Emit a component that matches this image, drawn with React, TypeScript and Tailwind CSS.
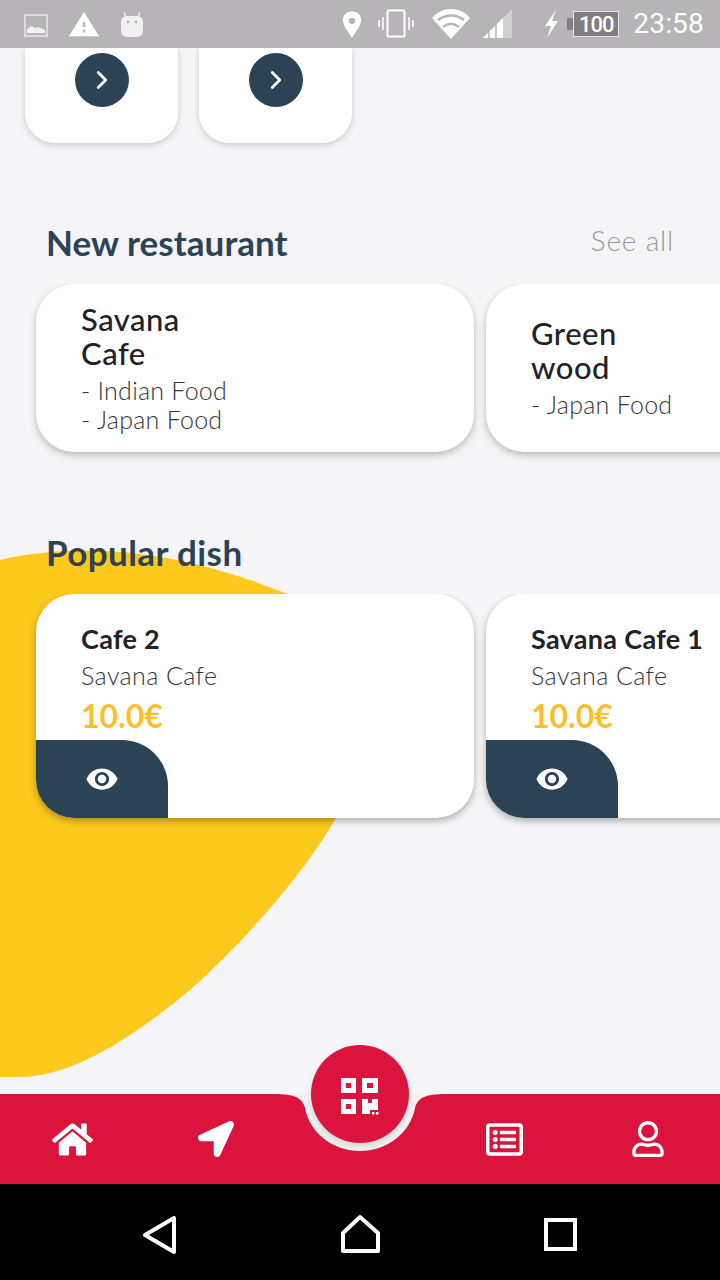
import { ChevronRight } from "lucide-react";
import { FaHome, FaLocationArrow, FaRegListAlt, FaRegUser } from "react-icons/fa";
import { MdRemoveRedEye } from "react-icons/md";

function StatusBar() {
  return (
    <div className="h-12 shrink-0 bg-[#b6b4b6] flex items-center pl-6 pr-[16px] text-white relative z-20">
      <svg width="24" height="24" viewBox="0 0 24 24" className="mt-0.5">
        <rect x="1" y="2" width="22" height="21" fill="none" stroke="#e6e6e6" strokeWidth="1.5" />
        <path d="M3 20v-4l5-3 3 2 3-1 7 3v3z" fill="#f2f2f2" />
      </svg>
      <svg width="30" height="28" viewBox="0 0 32 28" className="ml-[21px]">
        <path d="M16 1L32 27H0z" fill="#fff" />
        <rect x="14.8" y="12" width="2.6" height="5" fill="#b6b4b6" />
        <rect x="14.8" y="20" width="2.6" height="3" fill="#b6b4b6" />
      </svg>
      <svg width="24" height="28" viewBox="0 0 24 28" className="ml-[21px]">
        <path d="M4 2l2 6M20 2l-2 6" stroke="#eee" strokeWidth="1.5" />
        <rect x="1" y="6" width="22" height="21" rx="6" fill="#f1f1f1" />
        <circle cx="8" cy="12" r="1.4" fill="#b6b4b6" />
        <circle cx="16" cy="12" r="1.4" fill="#b6b4b6" />
      </svg>
      <div className="flex-1" />
      <svg width="20" height="30" viewBox="0 0 22 30">
        <path fillRule="evenodd" d="M11 1C5 1 1 5.500 1 11c0 6 6 13 10 19 4-6 10-13 10-19C21 5.500 17 1 11 1zm0 7a3.500 3.500 0 110 7 3.500 3.500 0 010-7z" fill="#fff" />
      </svg>
      <svg width="36" height="30" viewBox="0 0 36 30" className="ml-[16px]">
        <rect x="9.500" y="1.500" width="17" height="26" rx="1.500" fill="none" stroke="#fff" strokeWidth="2" />
        <path d="M5 8v13M1 11v7M31 8v13M35 11v7" stroke="#f0f0f0" strokeWidth="2" />
      </svg>
      <svg width="42" height="32" viewBox="0 0 40 32" className="ml-[16px]">
        <path d="M20 31L1 10C6 4 13 1 20 1s14 3 19 9z" fill="#fff" />
        <path d="M7 12c8-6 18-6 26 0M12 19c5-4 11-4 16 0" fill="none" stroke="#b6b4b6" strokeWidth="2.500" />
      </svg>
      <svg width="30" height="30" viewBox="0 0 30 30" className="ml-[11px]">
        <path d="M0 29L29 0v29z" fill="#d2d1d2" />
        <path d="M0 29L20 9v20z" fill="#fff" />
        <path d="M6 29v-10M13 29V14" stroke="#b6b4b6" strokeWidth="1.500" />
      </svg>
      <svg width="18" height="30" viewBox="0 0 18 30" className="ml-[29px]">
        <path d="M14 1L3 17h6L5 29 16 12h-6z" fill="#fff" />
      </svg>
      <div className="ml-[7px] flex items-center">
        <div className="w-[6px] h-3 bg-[#807e80]" />
        <div className="w-[46px] h-[26px] bg-[#807e80] border border-[#e6e6e6] flex items-center justify-center font-['Roboto',sans-serif] text-[22px] font-medium tracking-[-1px]">
          100
        </div>
      </div>
      <span className="ml-[14px] font-['Roboto',sans-serif] text-[28px] leading-none tracking-[0.2px]">23:58</span>
    </div>
  );
}

function TopCard() {
  return (
    <div className="w-[153px] h-[95px] bg-white rounded-b-[30px] shadow-[0_2px_6px_rgba(0,0,0,0.18)] flex justify-center pt-[5px]">
      <div className="w-[54px] h-[54px] rounded-full bg-[#2c4356] flex items-center justify-center text-white">
        <ChevronRight size={30} strokeWidth={2.25} />
      </div>
    </div>
  );
}

function RestaurantCard({ name, foods, width, top }: { name: string; foods: string; width: string; top: string }) {
  return (
    <div className={`${width} ${top} shrink-0 h-[168px] bg-white rounded-[38px] shadow-[0_3px_7px_rgba(0,0,0,0.25)] pl-[45px]`}>
      <div className="text-[31px] leading-[34px] text-[#1f2226] font-medium tracking-[0.5px] whitespace-pre-line">{name}</div>
      <div className="mt-[6px] text-[25px] leading-[29px] font-light tracking-[0.25px] text-[#33363a] whitespace-pre-line">{foods}</div>
    </div>
  );
}

function DishCard({ name, width }: { name: string; width: string }) {
  return (
    <div className={`${width} shrink-0 h-[224px] bg-white rounded-[38px] shadow-[0_3px_7px_rgba(0,0,0,0.3)] overflow-hidden flex flex-col`}>
      <div className="pl-[45px] pt-[28px] flex-1">
        <div className="text-[27px] leading-[34px] font-bold text-[#1f2226] tracking-[0.3px]">{name}</div>
        <div className="text-[25px] leading-[30px] mt-[4px] font-light tracking-[0.4px] text-[#33363a]">Savana Cafe</div>
        <div className="text-[32px] leading-[34px] mt-[9px] font-bold text-[#fbbf2e]">10.0€</div>
      </div>
      <div className="w-[132px] h-[78px] bg-[#2c4356] rounded-tr-[46px] flex items-center pl-[49px] text-white">
        <MdRemoveRedEye size={34} />
      </div>
    </div>
  );
}

function BottomNav() {
  return (
    <div className="h-[90px] shrink-0 bg-[#da143c] relative flex items-center text-white z-10">
      {/* notch behind the scan button */}
      <svg width="180" height="60" viewBox="0 0 180 60" className="absolute left-[270px] top-0">
        <path
          d="M0 0H180C158 0 148 2 145 14C140 40 116 57 90 57C64 57 40 40 35 14C32 2 22 0 0 0Z"
          fill="#f1f1f2"
        />
      </svg>
      <div className="absolute left-[311px] top-[-49px] w-[98px] h-[98px] rounded-full bg-[#da143c] flex items-center justify-center shadow-[0_3px_6px_rgba(0,0,0,0.12)]">
        <svg width="38" height="37" viewBox="0 0 38 37" className="mt-1">
          <path
            fillRule="evenodd"
            fill="#fff"
            d="M0 0H15V15H0ZM5 5V10H10V5ZM21 0H37V15H21ZM26 5V10H32V5ZM0 21H15V36H0ZM5 26V31H10V26ZM21 21H27V25H31V21H37V32H29V36H21Z"
          />
          <rect x="31" y="34" width="2.500" height="2.500" fill="#fff" />
          <rect x="35" y="34" width="2.500" height="2.500" fill="#fff" />
        </svg>
      </div>
      <div className="w-[144px] flex justify-center">
        <FaHome size={41} />
      </div>
      <div className="w-[144px] flex justify-center">
        <FaLocationArrow size={36} />
      </div>
      <div className="w-[144px]" />
      <div className="w-[144px] flex justify-center">
        <FaRegListAlt size={37} />
      </div>
      <div className="w-[144px] flex justify-center">
        <FaRegUser size={36} />
      </div>
    </div>
  );
}

export default function App() {
  return (
    <div className="w-[720px] h-[1280px] relative overflow-hidden flex flex-col bg-[#f5f5f7] font-['Lato',sans-serif]">
      <StatusBar />

      {/* yellow blob */}
      <svg width="360" height="540" viewBox="0 0 360 540" className="absolute left-0 top-[545px]">
        <path
          d="M0 15C50 3 100 4 140 9C190 15 240 30 285 48C330 70 345 180 348 220C349 240 345 258 336 273C300 335 240 400 190 445C130 495 70 532 20 532L0 532Z"
          fill="#fcc91c"
        />
      </svg>

      <div className="flex-1 relative min-h-0">
        <div className="flex gap-[21px] pl-[25px]">
          <TopCard />
          <TopCard />
        </div>

        <div className="flex justify-between items-center pl-[46px] pr-[46px] mt-[79px] h-[44px]">
          <h2 className="text-[35px] -mt-1 font-bold text-[#2c4356] tracking-[0.05px]">New restaurant</h2>
          <span className="text-[28px] font-light tracking-[0.8px] text-[#98989c] -mt-[8px]">See all</span>
        </div>
        <div className="flex gap-3 pl-9 mt-[18px] overflow-hidden pb-3">
          <RestaurantCard name={"Savana\nCafe"} foods={"- Indian Food\n- Japan Food"} width="w-[438px]" top="pt-[18px]" />
          <RestaurantCard name={"Green\nwood"} foods="- Japan Food" width="w-[300px]" top="pt-[32px]" />
        </div>

        <h2 className="pl-[46px] mt-[68px] h-[44px] leading-[40px] text-[35px] font-bold text-[#2c4356] tracking-[0.4px]">Popular dish</h2>
        <div className="flex gap-3 pl-9 mt-[18px] overflow-hidden pb-3">
          <DishCard name="Cafe 2" width="w-[438px]" />
          <DishCard name="Savana Cafe 1" width="w-[300px]" />
        </div>
      </div>

      <BottomNav />

      <div className="h-24 shrink-0 bg-black flex items-center text-white relative">
        <svg width="720" height="96" viewBox="0 0 720 96">
          <path d="M174 34V68L145 51Z" fill="none" stroke="#fff" strokeWidth="4" strokeLinejoin="round" />
          <path d="M343 67V49L360 33L378 49V67Z" fill="none" stroke="#fff" strokeWidth="4" strokeLinejoin="round" />
          <rect x="546" y="36" width="29" height="29" fill="none" stroke="#fff" strokeWidth="4" />
        </svg>
      </div>
    </div>
  );
}
